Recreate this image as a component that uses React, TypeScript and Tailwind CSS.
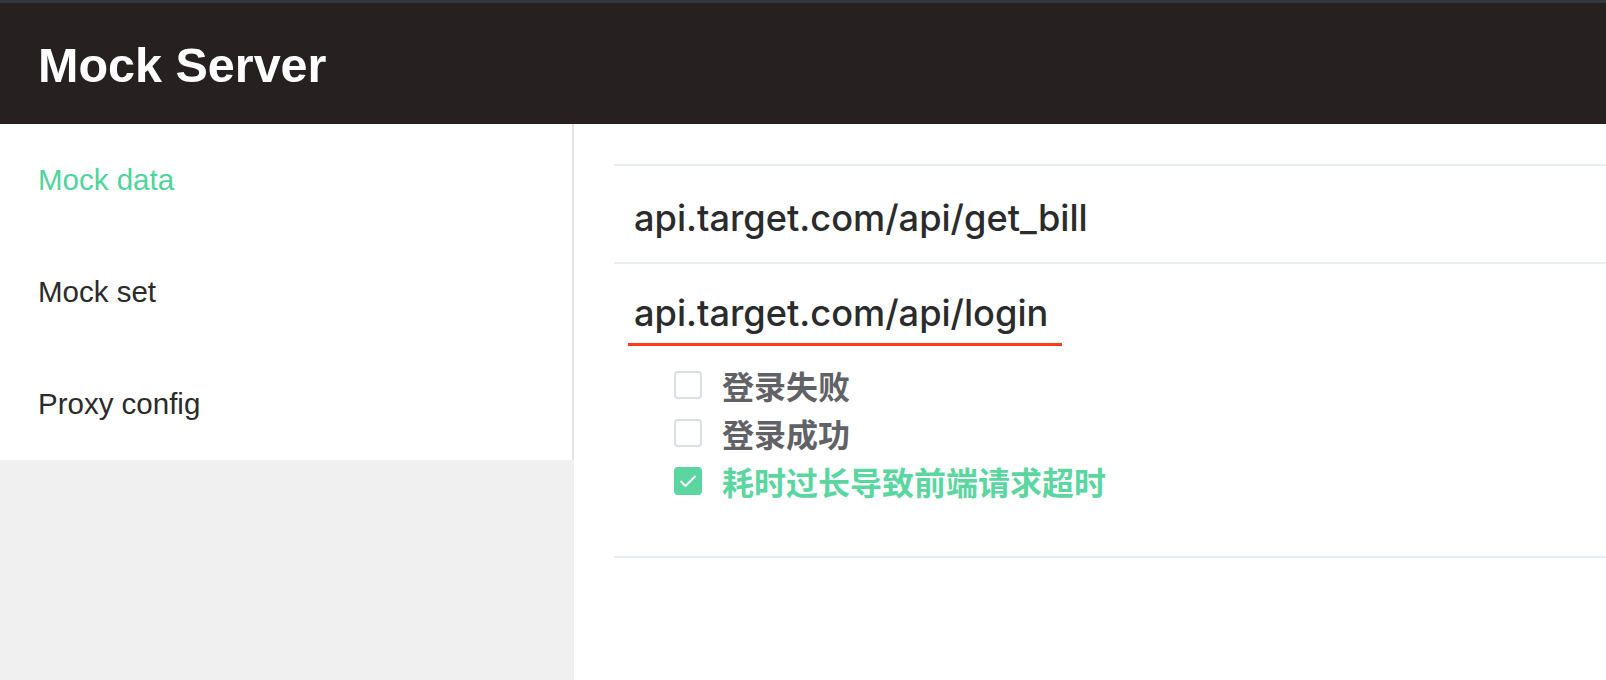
import React from "react";

const menu = [
  { label: "Mock data", active: true },
  { label: "Mock set", active: false },
  { label: "Proxy config", active: false },
];

const options = [
  { label: "登录失败", checked: false },
  { label: "登录成功", checked: false },
  { label: "耗时过长导致前端请求超时", checked: true },
];

function CheckBox({ checked }: { checked: boolean }) {
  if (checked) {
    return (
      <span className="flex h-[28px] w-[28px] shrink-0 items-center justify-center rounded-[4px] bg-[#5cd6a1]">
        <svg width="22" height="22" viewBox="0 0 22 22" fill="none">
          <path d="M4 11.5l4.5 4.5L18 6.5" stroke="white" strokeWidth="1.9" strokeLinecap="round" strokeLinejoin="round" />
        </svg>
      </span>
    );
  }
  return <span className="block h-[28px] w-[28px] shrink-0 rounded-[4px] border-2 border-[#dcdfe6] bg-white" />;
}

export default function App() {
  return (
    <div className="flex h-[680px] w-[1606px] flex-col overflow-hidden bg-white" style={{ fontFamily: "'Liberation Sans', Arial, sans-serif" }}>
      <div className="h-[3px] bg-[#33383c]" />
      <header className="flex h-[121px] items-center bg-[#262020] pl-[38px] pt-[4px]">
        <h1 className="text-[48.5px] font-bold leading-none text-white">Mock Server</h1>
      </header>
      <div className="flex flex-1">
        <aside className="flex w-[574px] flex-col bg-[#f0f0f0]">
          <nav className="flex flex-col border-r-2 border-[#e2e2e2] bg-white">
            {menu.map((m) => (
              <div
                key={m.label}
                className={`flex h-[112px] items-center pl-[38px] text-[29.5px] ${m.active ? "text-[#4fd49c]" : "text-[#2b2b2b]"}`}
              >
                {m.label}
              </div>
            ))}
          </nav>
        </aside>
        <main className="flex-1 pl-[40px] pt-[40px]">
          <div className="border-t-2 border-[#eaedf3]" style={{ fontFamily: "Inter, 'Noto Sans', sans-serif" }}>
            <div className="flex h-[96px] items-center pl-[20px] pt-[8px] text-[36.2px] font-medium text-[#2a2b2d]">
              api.target.com/api/get_bill
            </div>
            <div className="h-[296px] border-t-2 border-b-2 border-[#eaedf3]">
              <div className="pl-[14px] pt-[29px]">
                <span className="inline-block border-b-[3px] border-[#ff3b1d] pl-[6px] pr-[14px] pb-[10px] text-[36.2px] font-medium leading-[40px] text-[#2a2b2d]">
                  api.target.com/api/login
                </span>
              </div>
              <div className="flex flex-col gap-[20px] pl-[60px] pt-[25px]" style={{ fontFamily: "'Noto Sans CJK SC', sans-serif" }}>
                {options.map((o) => (
                  <label key={o.label} className="flex h-[28px] items-center gap-[20px]">
                    <CheckBox checked={o.checked} />
                    <span className={`text-[32px] font-semibold leading-none ${o.checked ? "text-[#5cd6a1]" : "text-[#606266]"}`}>
                      {o.label}
                    </span>
                  </label>
                ))}
              </div>
            </div>
          </div>
        </main>
      </div>
    </div>
  );
}
